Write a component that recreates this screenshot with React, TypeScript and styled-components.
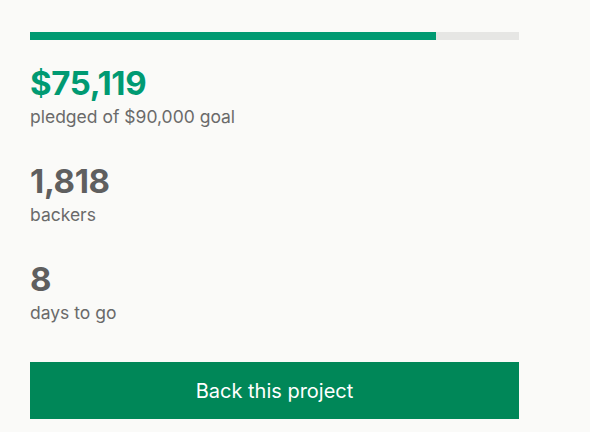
import styled, { createGlobalStyle } from "styled-components";

const GlobalStyle = createGlobalStyle`
    body {
        margin: 0;
        background: #fafaf8;
        font-family: Inter, "Noto Sans", sans-serif;
    }
`;

const Panel = styled.section`
    width: 489px;
    padding: 32px 30px;
    display: flex;
    flex-direction: column;
`;

const Track = styled.div`
    height: 8px;
    background: #e6e6e4;
    margin-bottom: 24px;
`;

const Fill = styled.div`
    height: 100%;
    background: #009a72;
`;

const Stats = styled.div`
    display: flex;
    flex-direction: column;
    gap: 35px;
`;

const Stat = styled.div`
    display: flex;
    flex-direction: column;
    gap: 4px;
`;

const Value = styled.div<{ $accent?: boolean }>`
    font-size: 33px;
    line-height: 38px;
    font-weight: 700;
    letter-spacing: -0.35px;
    color: ${(props) => (props.$accent ? "#009a72" : "#5f5f5f")};
`;

const Label = styled.div`
    font-size: 17.5px;
    line-height: 21px;
    color: #6a6a6a;
`;

const BackButton = styled.button`
    margin-top: 39px;
    height: 57px;
    border: none;
    background: #008758;
    color: #ffffff;
    font-family: Inter, "Noto Sans", sans-serif;
    font-size: 20px;
    cursor: pointer;
`;

const pledged = 75119;
const goal = 90000;

function App() {
    const stats = [
        { value: `$${pledged.toLocaleString("en-US")}`, label: `pledged of $${goal.toLocaleString("en-US")} goal`, accent: true },
        { value: "1,818", label: "backers" },
        { value: "8", label: "days to go" },
    ];

    return (
        <>
            <GlobalStyle />
            <Panel>
                <Track>
                    <Fill style={{ width: `${Math.floor((pledged / goal) * 100)}%` }} />
                </Track>
                <Stats>
                    {stats.map((stat) => (
                        <Stat key={stat.label}>
                            <Value $accent={stat.accent}>{stat.value}</Value>
                            <Label>{stat.label}</Label>
                        </Stat>
                    ))}
                </Stats>
                <BackButton>Back this project</BackButton>
            </Panel>
        </>
    );
}

export default App;
